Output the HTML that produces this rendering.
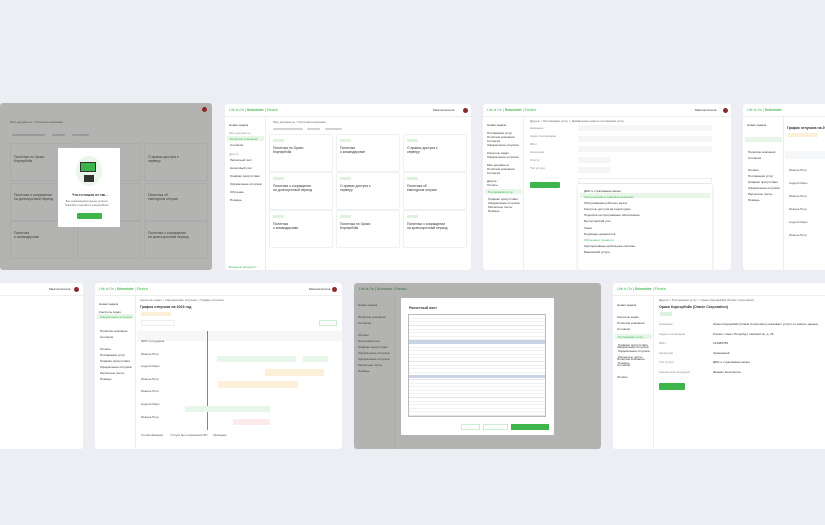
<!DOCTYPE html>
<html><head><meta charset="utf-8"><style>
*{margin:0;padding:0;box-sizing:border-box}
body{width:825px;height:525px;background:#eceef4;position:relative;overflow:hidden;font-family:"Liberation Sans","Noto Sans CJK SC",sans-serif}
.card{position:absolute;background:#fff;border-radius:3px;overflow:hidden}
.a{position:absolute}
.t{position:absolute;font-size:3px;color:#333;white-space:nowrap;line-height:4px}
.g{color:#3cb54a}
.bar{position:absolute;height:2px;background:#cfd2d6;border-radius:1px}
.sb{position:absolute;top:13px;bottom:0;width:41px;border-right:1px solid #eee}
.hd{position:absolute;left:0;right:0;top:0;height:13px;border-bottom:1px solid #eee}
.mini{position:absolute;border:1px solid #f0f1f3;border-radius:2px;background:#fff}
.tag{position:absolute;height:3px;width:11px;background:#dcf2de;border-radius:1px}
.ov{position:absolute;inset:0;background:rgba(75,77,72,.42)}
.av{position:absolute;width:5px;height:5px;border-radius:50%;background:#8a2a2a}
</style></head><body>

<!-- Card 1 (overlay + modal) -->
<div class="card" style="left:0;top:103px;width:212px;height:167px">
 <div class="t" style="left:10px;top:17px;color:#555">Мои документы &gt; Политики компании</div>
 <div class="bar" style="left:12px;top:31px;width:33px"></div>
 <div class="bar" style="left:52px;top:31px;width:13px"></div>
 <div class="bar" style="left:72px;top:31px;width:17px"></div>
 <div class="mini" style="left:10px;top:40px;width:64px;height:38px"></div>
 <div class="mini" style="left:77px;top:40px;width:64px;height:38px"></div>
 <div class="mini" style="left:144px;top:40px;width:64px;height:38px"></div>
 <div class="mini" style="left:10px;top:80px;width:64px;height:38px"></div>
 <div class="mini" style="left:77px;top:80px;width:64px;height:38px"></div>
 <div class="mini" style="left:144px;top:80px;width:64px;height:38px"></div>
 <div class="mini" style="left:10px;top:118px;width:64px;height:38px"></div>
 <div class="mini" style="left:77px;top:118px;width:64px;height:38px"></div>
 <div class="mini" style="left:144px;top:118px;width:64px;height:38px"></div>
 <div class="t" style="left:14px;top:52px;font-size:3.4px">Политика по Орако<br>Кэрнэрбэйк</div>
 <div class="t" style="left:148px;top:52px;font-size:3.4px">О правах доступа к<br>серверу</div>
 <div class="t" style="left:14px;top:90px;font-size:3.4px">Политика о сокращении<br>на долгосрочный период</div>
 <div class="t" style="left:148px;top:90px;font-size:3.4px">Политика об<br>ежегодном отпуске</div>
 <div class="t" style="left:14px;top:128px;font-size:3.4px">Политика<br>о командировке</div>
 <div class="t" style="left:148px;top:128px;font-size:3.4px">Политика о сокращении<br>на краткосрочный период</div>
 <div class="ov"></div>
 <div class="av" style="left:202px;top:4px"></div>
 <div class="a" style="left:58px;top:45px;width:62px;height:79px;background:#fff;border-radius:1px">
  <div class="a" style="left:18px;top:8px;width:26px;height:30px;border-radius:50%;background:#eaf6ea"></div>
  <div class="a" style="left:22px;top:14px;width:16px;height:10px;background:#3cb54a;border:1px solid #333"></div>
  <div class="a" style="left:26px;top:27px;width:10px;height:7px;background:#333"></div>
  <div class="t" style="left:14px;top:45px;font-size:3.3px;font-weight:bold">Что-то пошло не так...</div>
  <div class="t" style="left:7px;top:52px;font-size:2.3px;color:#666;text-align:center">Ваш запрашиваемый данные устарели.<br>Попробуйте перезайти в личный кабинет</div>
  <div class="a" style="left:19px;top:65px;width:25px;height:6px;background:#3cb54a;border-radius:1px"></div>
 </div>
</div>

<!-- Card 2 -->
<div class="card" style="left:225px;top:104px;width:246px;height:166px">
 <div class="hd"><div class="t g" style="left:4px;top:4px;font-size:3.5px">Life Is On | <b>Schneider</b> | Electric</div>
  <div class="t" style="left:208px;top:4px">Максим Козлов</div><div class="av" style="left:238px;top:4px"></div></div>
 <div class="sb" style="left:0">
  <div class="t" style="left:4px;top:6px">Новая задача</div>
  <div class="t" style="left:4px;top:14px;color:#999">Мои документы</div>
  <div class="a" style="left:2px;top:19px;width:37px;height:5px;background:#e8f6e9"></div>
  <div class="t g" style="left:5px;top:20px">Политики компании</div>
  <div class="t" style="left:5px;top:26px">Согласия</div>
  <div class="t" style="left:4px;top:35px;color:#999">Другое</div>
  <div class="t" style="left:5px;top:41px">Расчетный лист<br><br>Налоговый учет<br><br>Графики присутствия<br><br>Оформление отпусков<br><br>Обучение<br><br>Помощь</div>
  <div class="t g" style="left:4px;top:148px">Возникли вопросы?</div>
 </div>
 <div class="t" style="left:48px;top:16px;color:#666">Мои документы &gt; Политики компании</div>
 <div class="bar" style="left:48px;top:24px;width:30px"></div>
 <div class="bar" style="left:82px;top:24px;width:13px"></div>
 <div class="bar" style="left:100px;top:24px;width:17px"></div>
 <div class="mini" style="left:44px;top:30px;width:64px;height:38px"></div>
 <div class="mini" style="left:111px;top:30px;width:64px;height:38px"></div>
 <div class="mini" style="left:178px;top:30px;width:64px;height:38px"></div>
 <div class="mini" style="left:44px;top:68px;width:64px;height:38px"></div>
 <div class="mini" style="left:111px;top:68px;width:64px;height:38px"></div>
 <div class="mini" style="left:178px;top:68px;width:64px;height:38px"></div>
 <div class="mini" style="left:44px;top:106px;width:64px;height:38px"></div>
 <div class="mini" style="left:111px;top:106px;width:64px;height:38px"></div>
 <div class="mini" style="left:178px;top:106px;width:64px;height:38px"></div>
 <div class="tag" style="left:48px;top:35px"></div><div class="tag" style="left:115px;top:35px"></div><div class="tag" style="left:182px;top:35px"></div>
 <div class="tag" style="left:48px;top:73px"></div><div class="tag" style="left:115px;top:73px"></div><div class="tag" style="left:182px;top:73px"></div>
 <div class="tag" style="left:48px;top:111px"></div><div class="tag" style="left:115px;top:111px"></div><div class="tag" style="left:182px;top:111px"></div>
 <div class="t" style="left:48px;top:42px;font-size:3.4px">Политика по Орако<br>Кэрнэрбэйк</div>
 <div class="t" style="left:115px;top:42px;font-size:3.4px">Политика<br>о командировке</div>
 <div class="t" style="left:182px;top:42px;font-size:3.4px">О правах доступа к<br>серверу</div>
 <div class="t" style="left:48px;top:80px;font-size:3.4px">Политика о сокращении<br>на долгосрочный период</div>
 <div class="t" style="left:115px;top:80px;font-size:3.4px">О правах доступа к<br>серверу</div>
 <div class="t" style="left:182px;top:80px;font-size:3.4px">Политика об<br>ежегодном отпуске</div>
 <div class="t" style="left:48px;top:118px;font-size:3.4px">Политика<br>о командировке</div>
 <div class="t" style="left:115px;top:118px;font-size:3.4px">Политика по Орако<br>Кэрнэрбэйк</div>
 <div class="t" style="left:182px;top:118px;font-size:3.4px">Политика о сокращении<br>на краткосрочный период</div>
</div>

<!-- Card 3 -->
<div class="card" style="left:483px;top:104px;width:248px;height:166px">
 <div class="hd"><div class="t g" style="left:4px;top:4px;font-size:3.5px">Life Is On | <b>Schneider</b> | Electric</div>
  <div class="t" style="left:212px;top:4px">Максим Козлов</div><div class="av" style="left:240px;top:4px"></div></div>
 <div class="sb" style="left:0">
  <div class="t" style="left:4px;top:6px">Новая задача<br><br>Поставщики услуг<br>Политики компании<br>Согласия<br>Оформление отпусков<br><br>Контроль задач<br>Оформление отпусков<br><br>Мои документы<br>Политики компании<br>Согласия<br><br>Другое<br>Оплаты</div>
  <div class="a" style="left:2px;top:72px;width:37px;height:5px;background:#e8f6e9"></div>
  <div class="t g" style="left:5px;top:73px">Поставщики услуг</div>
  <div class="t" style="left:5px;top:80px">Графики присутствия<br>Оформление отпусков<br>Расчетные листы<br>Помощь</div>
 </div>
 <div class="t" style="left:47px;top:15px;color:#666">Другое &gt; Поставщики услуг &gt; Добавление нового поставщика услуг</div>
 <div class="a" style="left:95px;top:21px;width:134px;height:6px;background:#f4f5f7"></div>
 <div class="a" style="left:95px;top:32px;width:134px;height:6px;background:#f4f5f7"></div>
 <div class="a" style="left:95px;top:42px;width:134px;height:6px;background:#f4f5f7"></div>
 <div class="a" style="left:95px;top:53px;width:32px;height:6px;background:#f4f5f7"></div>
 <div class="a" style="left:95px;top:63px;width:32px;height:6px;background:#f4f5f7"></div>
 <div class="a" style="left:95px;top:74px;width:134px;height:6px;border:1px solid #eee"></div>
 <div class="t" style="left:47px;top:22px;color:#888">Название<br><br>Адрес поставщика<br><br>ИНН<br><br>Категория<br><br>Статус<br><br>Тип услуги</div>
 <div class="a" style="left:95px;top:80px;width:134px;height:87px;background:#fff;box-shadow:0 1px 3px rgba(0,0,0,.15)">
  <div class="a" style="left:2px;top:9px;width:130px;height:5px;background:#e8f6e9"></div>
  <div class="t" style="left:6px;top:4px;line-height:6.1px">ДМС и страхование жизни<br><span class="g">Консультации в правовых вопросах</span><br>Обслуживание рабочего места<br>Контроль доступа на территорию<br>Подписка на программное обеспечение<br>Бухгалтерский учет<br>Такси<br>Переводы документов<br><span class="g">Обучение и тренинги</span><br>Корпоративные мобильные системы<br>Банковский услуги</div>
 </div>
 <div class="a" style="left:47px;top:78px;width:30px;height:6px;background:#3cb54a;border-radius:1px"></div>
</div>

<!-- Card 4 -->
<div class="card" style="left:743px;top:104px;width:90px;height:166px">
 <div class="hd"><div class="t g" style="left:4px;top:4px;font-size:3.5px">Life Is On | <b>Schneider</b></div></div>
 <div class="sb" style="left:0">
  <div class="t" style="left:4px;top:6px">Новая задача</div>
  <div class="a" style="left:2px;top:20px;width:37px;height:5px;background:#e8f6e9"></div>
  <div class="t" style="left:5px;top:32px;line-height:6px">Политики компании<br>Согласия<br><br>Оплаты<br>Поставщики услуг<br>Графики присутствия<br>Оформление отпусков<br>Расчетные листы<br>Помощь</div>
 </div>
 <div class="t" style="left:44px;top:22px;font-size:3.5px;font-weight:bold">График отпусков на 2023</div>
 <div class="a" style="left:45px;top:29px;width:30px;height:4px;background:#fdf0d8"></div>
 <div class="a" style="left:42px;top:47px;width:50px;height:8px;background:#f6f7f9"></div>
 <div class="t" style="left:46px;top:60px;line-height:13px;color:#555">Иванов Петр<br>Андрей Марк<br>Иванов Петр<br>Иванов Петр<br>Андрей Марк<br>Иванов Петр</div>
</div>

<!-- Card 5 -->
<div class="card" style="left:-10px;top:283px;width:93px;height:166px">
 <div class="hd"><div class="t" style="left:59px;top:4px">Максим Козлов</div><div class="av" style="left:84px;top:4px"></div></div>
</div>

<!-- Card 6 -->
<div class="card" style="left:95px;top:283px;width:247px;height:166px">
 <div class="hd"><div class="t g" style="left:4px;top:4px;font-size:3.5px">Life Is On | <b>Schneider</b> | Electric</div>
  <div class="t" style="left:214px;top:4px">Максим Козлов</div><div class="av" style="left:237px;top:4px"></div></div>
 <div class="sb" style="left:0">
  <div class="t" style="left:4px;top:6px">Новая задача<br><br>Контроль задач</div>
  <div class="a" style="left:2px;top:18px;width:37px;height:5px;background:#e8f6e9"></div>
  <div class="t g" style="left:5px;top:19px">Оформление отпусков</div>
  <div class="t" style="left:5px;top:32px;line-height:6px">Политики компании<br>Согласия<br><br>Оплаты<br>Поставщики услуг<br>Графики присутствия<br>Оформление отпусков<br>Расчетные листы<br>Помощь</div>
  <div class="t g" style="left:4px;top:155px">Возникли вопросы?</div>
 </div>
 <div class="t" style="left:45px;top:15px;color:#666">Контроль задач &gt; Оформление отпусков &gt; График отпусков</div>
 <div class="t" style="left:45px;top:22px;font-size:3.6px;font-weight:bold">График отпусков на 2023 год</div>
 <div class="a" style="left:46px;top:29px;width:30px;height:4px;background:#fdf0d8"></div>
 <div class="a" style="left:46px;top:37px;width:34px;height:6px;border:1px solid #eee"></div>
 <div class="a" style="left:224px;top:37px;width:18px;height:6px;border:1px solid #cdeccf"></div>
 <div class="a" style="left:42px;top:48px;width:205px;height:10px;background:#f6f7f9"></div>
 <div class="t" style="left:46px;top:52px;line-height:12.6px;color:#555">ФИО сотрудника<br>Иванов Петр<br>Андрей Марк<br>Иванов Петр<br>Иванов Петр<br>Андрей Марк<br>Иванов Петр</div>
 <div class="a" style="left:112px;top:48px;width:1px;height:99px;background:#3cb54a"></div>
 <div class="a" style="left:122px;top:73px;width:79px;height:6px;background:#e8f6e9"></div>
 <div class="a" style="left:208px;top:73px;width:25px;height:6px;background:#e8f6e9"></div>
 <div class="a" style="left:170px;top:86px;width:59px;height:7px;background:#fdf0d8"></div>
 <div class="a" style="left:123px;top:98px;width:80px;height:7px;background:#fdf0d8"></div>
 <div class="a" style="left:90px;top:123px;width:85px;height:6px;background:#e8f6e9"></div>
 <div class="a" style="left:138px;top:136px;width:37px;height:6px;background:#fdeaea"></div>
 <div class="t" style="left:46px;top:150px;color:#555">Согласованный &nbsp; &nbsp; &nbsp; &nbsp; Отпуск без сохранения ЗП &nbsp; &nbsp; &nbsp; Праздник</div>
</div>

<!-- Card 7 (overlay + payslip modal) -->
<div class="card" style="left:354px;top:283px;width:247px;height:166px">
 <div class="sb" style="left:0">
  <div class="t" style="left:4px;top:6px;line-height:6px">Новая задача<br><br>Политики компании<br>Согласия<br><br>Оплаты<br>Налоговый учет<br>Графики присутствия<br>Оформление отпусков<br>Оформление отпусков<br>Расчетные листы<br>Помощь</div>
 </div>
 <div class="ov"></div>
 <div class="av" style="left:251px;top:4px"></div>
 <div class="t" style="left:5px;top:4px;color:#3a6e3c;font-size:3.5px">Life Is On | Schneider | Electric</div>
 <div class="a" style="left:47px;top:15px;width:153px;height:137px;background:#fff;border-radius:1px">
  <div class="t" style="left:8px;top:8px;font-size:3.5px;font-weight:bold">Расчетный лист</div>
  <div class="a" style="left:7px;top:16px;width:138px;height:103px;border:1px solid #bbb;background:
   repeating-linear-gradient(#fff 0 3px,#e4e4e4 3px 3.6px)"></div>
  <div class="a" style="left:8px;top:42px;width:136px;height:4px;background:#c9d3e3"></div>
  <div class="a" style="left:8px;top:77px;width:136px;height:3px;background:#c9d3e3"></div>
  <div class="a" style="left:60px;top:126px;width:19px;height:6px;border:1px solid #cdeccf"></div>
  <div class="a" style="left:82px;top:126px;width:25px;height:6px;border:1px solid #cdeccf"></div>
  <div class="a" style="left:110px;top:126px;width:38px;height:6px;background:#3cb54a"></div>
 </div>
</div>

<!-- Card 8 -->
<div class="card" style="left:613px;top:283px;width:220px;height:166px">
 <div class="hd"><div class="t g" style="left:4px;top:4px;font-size:3.5px">Life Is On | <b>Schneider</b> | Electric</div></div>
 <div class="sb" style="left:0">
  <div class="t" style="left:4px;top:6px;line-height:6px">Новая задача<br><br>Контроль задач<br>Политики компании<br>Согласия<br>Оформление отпусков<br><br>Оформление отпусков<br><br>Политики компании<br>Согласия<br><br>Оплаты</div>
  <div class="a" style="left:2px;top:38px;width:37px;height:5px;background:#e8f6e9"></div>
  <div class="t g" style="left:5px;top:39px">Поставщики услуг</div>
  <div class="t" style="left:5px;top:46px;line-height:6px">Графики присутствия<br>Оформление отпусков<br>Расчетные листы<br>Помощь</div>
  <div class="t g" style="left:4px;top:155px">Возникли вопросы?</div>
 </div>
 <div class="t" style="left:46px;top:15px;color:#666">Другое &gt; Поставщики услуг &gt; Орако Кэрнэрбэйк (Oracle Corporation)</div>
 <div class="t" style="left:46px;top:22px;font-size:3.6px;font-weight:bold">Орако Кэрнэрбэйк (Oracle Corporation)</div>
 <div class="a" style="left:47px;top:29px;width:12px;height:4px;background:#dcf2de"></div>
 <div class="t" style="left:46px;top:37px;color:#888;line-height:9.6px">Описание<br>Адрес поставщика<br>ИНН<br>Категория<br>Тип услуги<br>Контактный сотрудник</div>
 <div class="t" style="left:100px;top:37px;line-height:9.6px">Орако Кэрнэрбэйк (Oracle Corporation) оказывает услуги по защите данных<br>Россия, Санкт-Петербург, Невский пр. д. 25<br>123456789<br>Оранжевый<br>ДМС и страхование жизни<br>Фрамис Константин</div>
 <div class="a" style="left:46px;top:100px;width:26px;height:7px;background:#3cb54a;border-radius:1px"></div>
</div>
</body></html>
